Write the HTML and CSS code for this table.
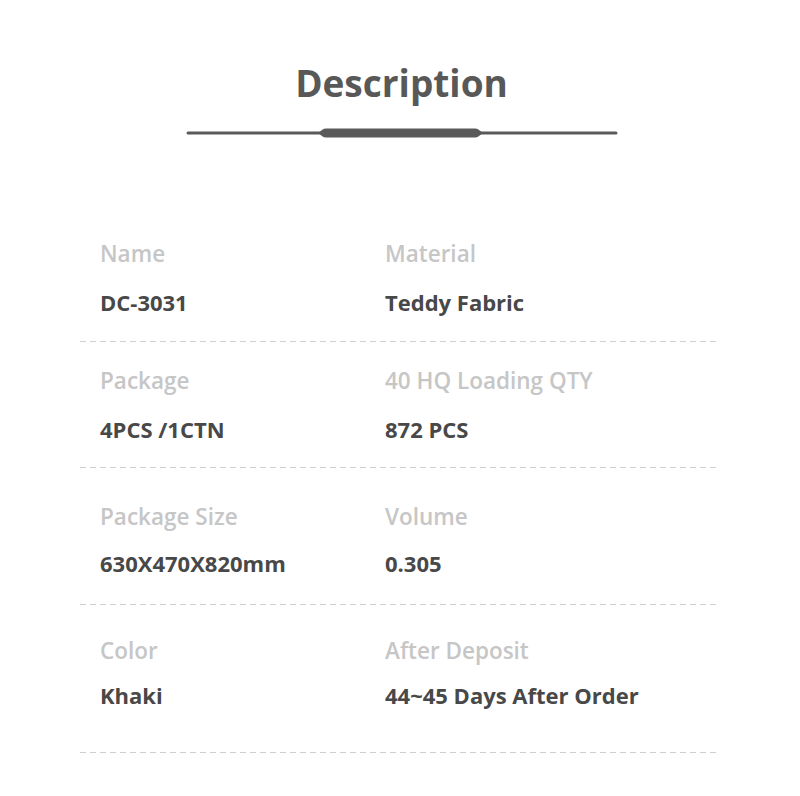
FILE: index.html
```html
<!DOCTYPE html>
<html lang="en">
<head>
<meta charset="utf-8">
<title>Description</title>
<link rel="stylesheet" href="styles.css">
</head>
<body>
<div class="page">
  <header class="head">
    <h1 class="title">Description</h1>
    <svg class="rule" width="432" height="12" viewBox="0 0 432 12" aria-hidden="true">
      <line x1="2" y1="6" x2="430" y2="6" stroke="#5a5a5a" stroke-width="3" stroke-linecap="round"/>
      <path d="M140 1.5 H289 C292 1.5 293 3 295 4.5 L297 6 L295 7.5 C293 9 292 10.5 289 10.5 H140 C137 10.5 136 9 134 7.5 L132 6 L134 4.5 C136 3 137 1.5 140 1.5 Z" fill="#5a5a5a"/>
    </svg>
  </header>

  <section class="specs">
    <div class="row row-1">
      <div class="cell">
        <div class="label">Name</div>
        <div class="value">DC-3031</div>
      </div>
      <div class="cell">
        <div class="label">Material</div>
        <div class="value">Teddy Fabric</div>
      </div>
    </div>
    <div class="row row-2">
      <div class="cell">
        <div class="label">Package</div>
        <div class="value">4PCS /1CTN</div>
      </div>
      <div class="cell">
        <div class="label">40 HQ Loading QTY</div>
        <div class="value">872 PCS</div>
      </div>
    </div>
    <div class="row row-3">
      <div class="cell">
        <div class="label">Package Size</div>
        <div class="value">630X470X820mm</div>
      </div>
      <div class="cell">
        <div class="label">Volume</div>
        <div class="value">0.305</div>
      </div>
    </div>
    <div class="row row-4">
      <div class="cell">
        <div class="label">Color</div>
        <div class="value">Khaki</div>
      </div>
      <div class="cell">
        <div class="label">After Deposit</div>
        <div class="value">44~45 Days After Order</div>
      </div>
    </div>
  </section>
</div>
</body>
</html>
```

FILE: styles.css
```css
html, body {
  margin: 0;
  padding: 0;
  background: #ffffff;
}

body {
  font-family: "Open Sans", "Noto Sans", "DejaVu Sans", sans-serif;
  font-weight: 600;
}

.page {
  width: 800px;
}

.head {
  display: flex;
  flex-direction: column;
  align-items: center;
  padding-top: 65px;
  padding-left: 3px;
}

.title {
  margin: 0;
  font-size: 37px;
  line-height: 36px;
  font-weight: 700;
  color: #585858;
}

.rule {
  display: block;
  margin-top: 26px;
}

.specs {
  margin-left: 80px;
  width: 638px;
  margin-top: 101px;
}

.row {
  display: grid;
  grid-template-columns: 305px 1fr;
  background-image: linear-gradient(to right, #cfcfcf 0, #cfcfcf 6px, transparent 6px);
  background-size: 10px 1px;
  background-repeat: repeat-x;
  background-position: 0 100%;
}

.cell {
  display: flex;
  flex-direction: column;
}

.cell:first-child {
  padding-left: 20px;
}

.label {
  font-size: 22.5px;
  line-height: 28px;
  font-weight: 600;
  color: #c6c6c6;
}

.value {
  font-size: 22px;
  line-height: 28px;
  font-weight: 700;
  color: #484848;
}

.row-1 { padding: 0 0 26px; }
.row-1 .value { margin-top: 20px; }

.row-2 { padding: 25px 0 25px; }
.row-2 .value { margin-top: 20px; }

.row-3 { padding: 35px 0 28px; }
.row-3 .value { margin-top: 18px; }

.row-4 { padding: 32px 0 44px; }
.row-4 .value { margin-top: 16px; }
```
